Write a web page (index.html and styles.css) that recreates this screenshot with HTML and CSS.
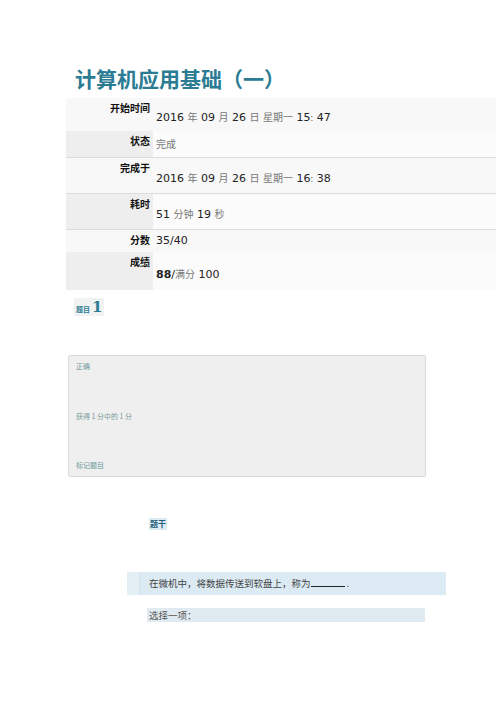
FILE: index.html
```html
<!DOCTYPE html>
<html lang="zh-CN">
<head>
    <meta charset="UTF-8">
    <title>计算机应用基础（一）</title>
    <link rel="stylesheet" href="styles.css">
</head>
<body>
    <div class="page">
        <h1 class="title">计算机应用基础（一）</h1>

        <!-- attempt summary -->
        <table class="summary">
            <tr class="odd h33">
                <th>开始时间</th>
                <td><span class="n">2016</span> <span class="cn">年</span> <span class="n">09</span> <span class="cn">月</span> <span class="n">26</span> <span class="cn">日</span> <span class="cn">星期一</span> <span class="n">15<span class="colon">:</span> 47</span></td>
            </tr>
            <tr class="even h25">
                <th>状态</th>
                <td><span class="cn">完成</span></td>
            </tr>
            <tr class="odd h36 line">
                <th>完成于</th>
                <td><span class="n">2016</span> <span class="cn">年</span> <span class="n">09</span> <span class="cn">月</span> <span class="n">26</span> <span class="cn">日</span> <span class="cn">星期一</span> <span class="n">16<span class="colon">:</span> 38</span></td>
            </tr>
            <tr class="even h36 line">
                <th>耗时</th>
                <td><span class="n">51</span> <span class="cn">分钟</span> <span class="n">19</span> <span class="cn">秒</span></td>
            </tr>
            <tr class="odd h22 line">
                <th>分数</th>
                <td><span class="n">35/40</span></td>
            </tr>
            <tr class="even h38">
                <th>成绩</th>
                <td><span class="n"><b>88</b>/</span><span class="cn">满分</span> <span class="n">100</span></td>
            </tr>
        </table>

        <!-- question number -->
        <div class="qno"><span class="qlabel">题目</span><span class="qnum">1</span></div>

        <div class="info">
            <div class="state">正确</div>
            <div class="grade">获得 1 分中的 1 分</div>
            <div class="flag">标记题目</div>
        </div>

        <div class="content">
            <h4 class="stem">题干</h4>
            <div class="qtext">
                <div class="qtext-in">在微机中，将数据传送到软盘上，称为<span class="blank"></span>.</div>
            </div>
            <div class="prompt">选择一项：</div>
        </div>
    </div>
</body>
</html>
```

FILE: styles.css
```css
body {
    margin: 0;
    padding: 0;
    background-color: #fff;
    font-family: "DejaVu Sans", "Noto Sans CJK SC", sans-serif;
    color: #222;
}
.page {
    padding-top: 65px;
    padding-left: 66px;
}
.title {
    margin: 0 0 7px 9px;
    font-family: "Noto Sans CJK SC", sans-serif;
    font-size: 21px;
    line-height: 26px;
    font-weight: bold;
    color: #2b7b93;
}
.summary {
    width: 430px;
    border-collapse: collapse;
}
.summary th {
    width: 84px;
    padding: 3px 3px 0 0;
    vertical-align: top;
    text-align: right;
    font-family: "Noto Sans CJK SC", sans-serif;
    font-size: 10px;
    line-height: 14px;
    font-weight: bold;
    color: #111;
}
.summary td {
    padding: 0 0 0 3px;
    vertical-align: middle;
    font-size: 11px;
}
.summary tr.odd th,
.summary tr.odd td {
    background-color: #f8f8f8;
}
.summary tr.even th {
    background-color: #eeeeee;
}
.summary tr.even td {
    background-color: #fbfbfb;
}
.summary tr.line th,
.summary tr.line td {
    border-top: 1px solid #dcdcdc;
}
.h22 { height: 23px; }
.h25 { height: 26px; }
.h33 { height: 33px; }
.h36 { height: 36px; }
.h38 { height: 38px; }
.summary tr.h33 td,
.summary tr.h36 td,
.summary tr.h38 td {
    padding-top: 4px;
}
.n {
    color: #222;
}
.colon {
    font-size: 8px;
    color: #555;
}
.cn {
    font-family: "Noto Sans CJK SC", serif;
    font-size: 10px;
    color: #777;
}

.qno {
    display: inline-flex;
    align-items: baseline;
    margin: 8px 0 0 8px;
    padding: 0 2px;
    background-color: #f1f3f3;
    color: #2b7b93;
    font-weight: bold;
}
.qlabel {
    font-family: "Noto Sans CJK SC", sans-serif;
    font-size: 7px;
    margin-right: 2px;
}
.qnum {
    font-family: "DejaVu Serif", serif;
    font-size: 15px;
    line-height: 18px;
}

.info {
    width: 358px;
    height: 122px;
    margin: 39px 0 0 2px;
    border: 1px solid #dadada;
    border-radius: 2px;
    background-color: #efefef;
    display: flex;
    flex-direction: column;
    justify-content: space-between;
    padding: 5px 0 6px 7px;
    box-sizing: border-box;
    font-family: "Noto Sans CJK SC", sans-serif;
    font-size: 7px;
    line-height: 10px;
    color: #6d9a9c;
}
.grade {
    color: #7a9a9a;
}

.content {
    width: 319px;
    margin: 35px 0 0 61px;
}
.stem {
    display: inline-block;
    margin: 0 0 42px 22px;
    padding: 0 1px;
    background-color: #dcebf3;
    font-family: "Noto Sans CJK SC", sans-serif;
    font-size: 8px;
    line-height: 12px;
    font-weight: bold;
    color: #1f5f7a;
}
.qtext {
    padding-left: 12px;
    background-color: #e3eef5;
}
.qtext-in {
    padding: 5px 10px 5px 9px;
    border-left: 1px solid #d0e1ea;
    background-color: #dbeaf3;
    font-family: "Noto Sans CJK SC", serif;
    font-size: 9.5px;
    line-height: 13px;
    color: #444;
}
.blank {
    display: inline-block;
    width: 34px;
    border-bottom: 1px solid #222;
    margin-right: 2px;
}
.prompt {
    width: 274px;
    margin: 13px 0 0 20px;
    padding: 0 2px;
    background-color: #e0ebf1;
    font-family: "Noto Sans CJK SC", serif;
    font-size: 9.5px;
    line-height: 14px;
    color: #555;
}
```
